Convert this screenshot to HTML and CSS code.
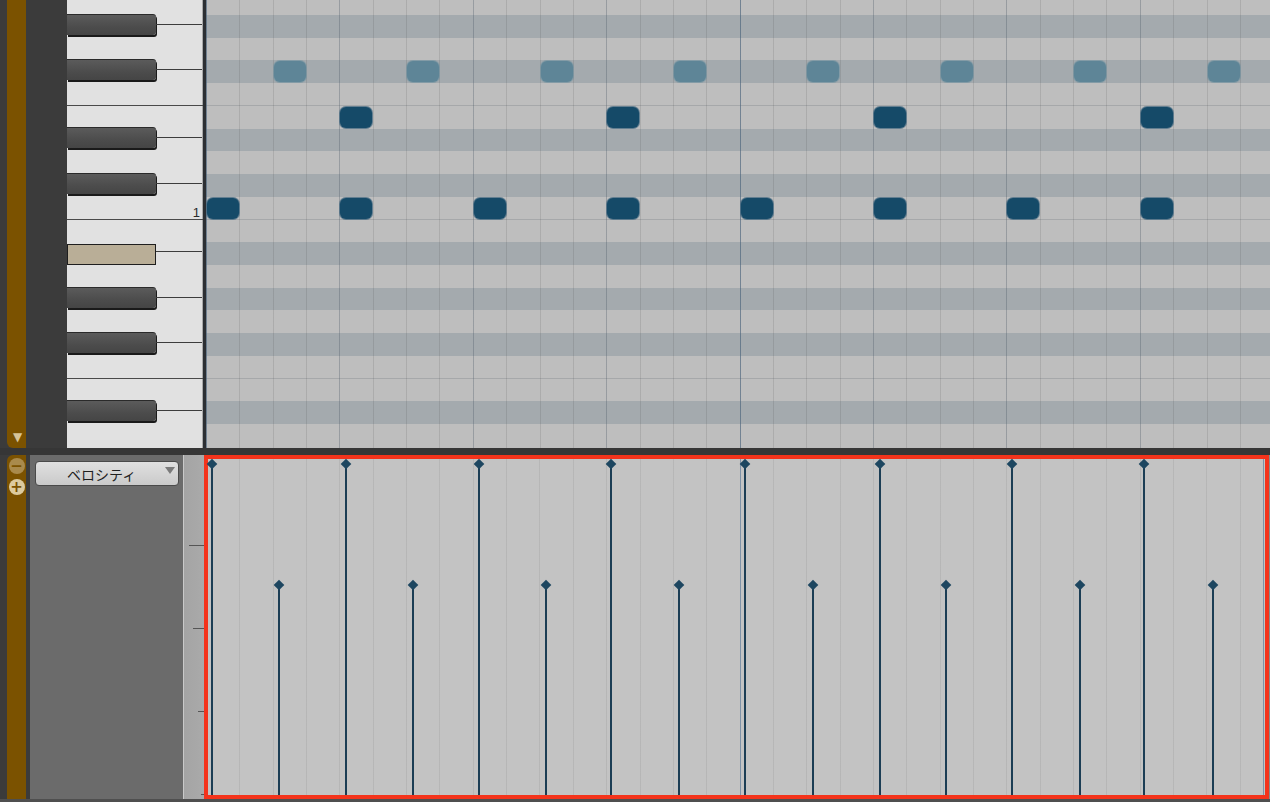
FILE: index.html
```html
<!DOCTYPE html>
<html lang="ja">
<head>
  <meta charset="UTF-8" />
  <title>ピアノロール</title>
  <link rel="stylesheet" href="styles.css">
</head>
<body>
  <div class="top">
    <div class="track">
      <div class="stripe stripe-top"><span class="fold">▼</span></div>
    </div>
    <div class="keyboard"><div class="rows" id="keys"></div></div>
    <div class="roll" id="roll">
      <div class="rows" id="rows"></div>
      <div class="vlines"></div>
    </div>
  </div>

  <div class="divider"></div>

  <div class="bottom">
    <div class="track track-b">
      <div class="stripe stripe-bottom">
        <span class="circle dim">&minus;</span>
        <span class="circle">+</span>
      </div>
    </div>
    <div class="panel">
      <div class="select">
        <span class="select-label">ベロシティ</span>
        <span class="caret"></span>
      </div>
    </div>
    <div class="ruler">
      <span class="tick t1"></span>
      <span class="tick t2"></span>
      <span class="tick t3"></span>
      <span class="tick t4"></span>
    </div>
    <div class="lane" id="lane"></div>
    <div class="edge"></div>
  </div>

  <script>
    // filas de arriba hacia abajo (A ... D), la 9 es C
    const tipos = ['w','b','w','b','w','w','b','w','b','w','w','b','w','b','w','b','w','w','b','w'];
    const separadas = [4, 9, 16];
    const ROW = 22.73;
    const COL = 33.35;

    const keys = document.getElementById('keys');
    const rows = document.getElementById('rows');

    tipos.forEach((t, i) => {
      const k = document.createElement('div');
      k.className = 'krow' + (separadas.includes(i) ? ' split' : '');
      if (t === 'b') {
        k.innerHTML = `<div class="bkey${i === 11 ? ' lit' : ''}"></div><div class="kline"></div>`;
        k.classList.add('kblack');
      }
      if (i === 9) {
        k.innerHTML = '<span class="octave">1</span>';
        k.classList.add('kc');
      }
      keys.appendChild(k);

      const r = document.createElement('div');
      r.className = 'row' + (t === 'b' ? ' dark' : '') + (separadas.includes(i) ? ' split' : '');
      rows.appendChild(r);
    });

    const roll = document.getElementById('roll');
    const notas = [];
    for (let c = 0; c < 32; c += 4) notas.push({ fila: 9, col: c, tipo: '' });
    for (let c = 4; c < 32; c += 8) notas.push({ fila: 5, col: c, tipo: '' });
    for (let c = 2; c < 32; c += 4) notas.push({ fila: 3, col: c, tipo: 'soft' });

    notas.forEach(n => {
      const el = document.createElement('div');
      el.className = 'note ' + n.tipo;
      const top = -7.7 + n.fila * ROW + 1;
      el.style.left = (n.col * COL + 1) + 'px';
      el.style.top = top + 'px';
      roll.appendChild(el);
    });

    // velocidades: x en la página, y del rombo dentro del carril
    const lane = document.getElementById('lane');
    const altas = [212, 346, 479, 611, 745, 880, 1012, 1144];
    const bajas = [279, 413, 546, 679, 813, 946, 1080, 1213];
    const tallos = altas.map(x => ({ x, y: 5 })).concat(bajas.map(x => ({ x, y: 126 })));

    tallos.forEach(s => {
      const el = document.createElement('div');
      el.className = 'stem';
      el.style.left = (s.x - 208 - 1) + 'px';
      el.style.top = s.y + 'px';
      el.innerHTML = '<span class="dot"></span>';
      lane.appendChild(el);
    });
  </script>
</body>
</html>
```

FILE: styles.css
```css
* {
  box-sizing: border-box;
}

html, body {
  margin: 0;
  padding: 0;
}

body {
  width: 1270px;
  height: 802px;
  overflow: hidden;
  background: #3a3a3a;
  font-family: 'Liberation Sans', 'Noto Sans CJK JP', sans-serif;
}

.top {
  display: flex;
  height: 448px;
}

.track {
  width: 67px;
  flex-shrink: 0;
  background: #3b3b3b;
  padding-left: 7px;
}

.stripe {
  width: 19px;
  height: 100%;
  background: #7b5200;
}

.stripe-top {
  border-radius: 0 0 0 6px;
  display: flex;
  align-items: flex-end;
  justify-content: center;
  padding-bottom: 5px;
}

.fold {
  color: #d6c49a;
  font-family: 'DejaVu Sans', sans-serif;
  font-size: 12px;
  line-height: 1;
  padding-left: 2px;
}

.keyboard {
  width: 139px;
  flex-shrink: 0;
  background: #e1e1e1;
  border-right: 3px solid #2c2f33;
  box-shadow: inset -1px 0 0 #a9a9a9;
  overflow: hidden;
}

.rows {
  margin-top: -7.7px;
  display: flex;
  flex-direction: column;
}

.krow {
  height: 22.73px;
  flex-shrink: 0;
  display: flex;
  align-items: center;
}

.krow.split {
  box-shadow: inset 0 -1px 0 #4a4a4a;
}

.kblack {
  padding-bottom: 4px;
}

.bkey {
  width: 89px;
  height: 21px;
  flex-shrink: 0;
  background: linear-gradient(#5b5b5b, #4c4c4c 60%, #454545);
  border-top: 1px solid #2a2a2a;
  border-radius: 0 3px 3px 0;
  box-shadow: 1px 2px 0 #1a1a1a;
}

.bkey.lit {
  background: #b9ae97;
  border: 1px solid #1e1e1e;
  border-radius: 0;
  box-shadow: none;
  margin-top: 5px;
}

.kline {
  flex: 1;
  height: 1px;
  background: #3c3c3c;
  margin-right: 1px;
}

.kc {
  justify-content: flex-end;
  align-items: flex-end;
}

.octave {
  font-size: 13px;
  color: #2a2a2a;
  padding-right: 3px;
  line-height: 1;
  padding-bottom: 1px;
}

.roll {
  flex: 1;
  position: relative;
  overflow: hidden;
  background: #bdbdbd;
}

.row {
  height: 22.73px;
  flex-shrink: 0;
  background: #bebebe;
}

.row.dark {
  background: #a4aaae;
}

.row.split {
  box-shadow: inset 0 -1px 0 #a6a8aa;
}

.vlines {
  position: absolute;
  inset: 0;
  background-image:
    repeating-linear-gradient(to right, rgba(70, 100, 130, 0.45) 0 1px, transparent 1px 533.6px),
    repeating-linear-gradient(to right, rgba(80, 100, 120, 0.22) 0 1px, transparent 1px 133.4px),
    repeating-linear-gradient(to right, rgba(60, 60, 60, 0.14) 0 1px, transparent 1px 33.35px);
}

.note {
  position: absolute;
  width: 32px;
  height: 21px;
  border-radius: 6px;
  background: #154a68;
  box-shadow: 0 0 0 1px rgba(60, 100, 125, 0.7);
  z-index: 1;
}

.note.soft {
  background: #5e8597;
  box-shadow: 0 0 0 1px rgba(110, 145, 160, 0.6);
}

.divider {
  height: 7px;
  background: #363636;
}

.bottom {
  display: flex;
  height: 347px;
  background: #4f4f4f;
}

.track-b {
  width: 30px;
  height: 344px;
}

.stripe-bottom {
  border-radius: 6px 0 0 0;
  display: flex;
  flex-direction: column;
  align-items: center;
  padding-top: 3px;
  gap: 5px;
}

.circle {
  width: 16px;
  height: 16px;
  border-radius: 50%;
  background: #dccb9f;
  color: #7b5200;
  font-family: 'DejaVu Sans', sans-serif;
  font-weight: bold;
  font-size: 15px;
  line-height: 16px;
  text-align: center;
}

.circle.dim {
  background: #a98a4c;
}

.panel {
  width: 153px;
  height: 344px;
  background: #6b6b6b;
  padding: 6px 4px 0 5px;
}

.select {
  height: 25px;
  border: 1px solid #4a4a4a;
  border-radius: 4px;
  background: linear-gradient(#e0e0e0, #cacaca);
  display: flex;
  align-items: center;
  position: relative;
}

.select-label {
  font-family: 'Noto Sans CJK JP', sans-serif;
  font-size: 14px;
  color: #1f1f1f;
  padding-left: 31px;
}

.caret {
  position: absolute;
  right: 3px;
  top: 5px;
  width: 0;
  height: 0;
  border-left: 5px solid transparent;
  border-right: 5px solid transparent;
  border-top: 7px solid #7a7a7a;
}

.ruler {
  width: 21px;
  height: 344px;
  background: linear-gradient(to right, #c9c9c9 0 1px, #a4a4a4 1px, #aaaaaa);
  display: flex;
  flex-direction: column;
  align-items: flex-end;
  padding-top: 90px;
  gap: 82px;
}

.tick {
  height: 1px;
  background: #555;
  display: block;
}

.t1 { width: 15px; }
.t2 { width: 11px; }
.t3 { width: 6px; }
.t4 { width: 3px; }

.lane {
  width: 1065px;
  height: 344px;
  border: 4px solid #f4331b;
  background-color: #c3c3c3;
  background-image:
    repeating-linear-gradient(to right, rgba(70, 110, 150, 0.5) 0 1px, transparent 1px 533.6px),
    repeating-linear-gradient(to right, rgba(60, 60, 60, 0.09) 0 1px, transparent 1px 33.35px);
  background-position: -2px 0;
  position: relative;
}

.stem {
  position: absolute;
  bottom: 0;
  width: 2px;
  background: #1b3d54;
}

.dot {
  position: absolute;
  left: -4px;
  top: -5px;
  width: 10px;
  height: 10px;
  background: #1d4660;
  transform: rotate(45deg) scale(0.75);
}

.edge {
  width: 1px;
  height: 344px;
  background: #8a8a8a;
}
```
